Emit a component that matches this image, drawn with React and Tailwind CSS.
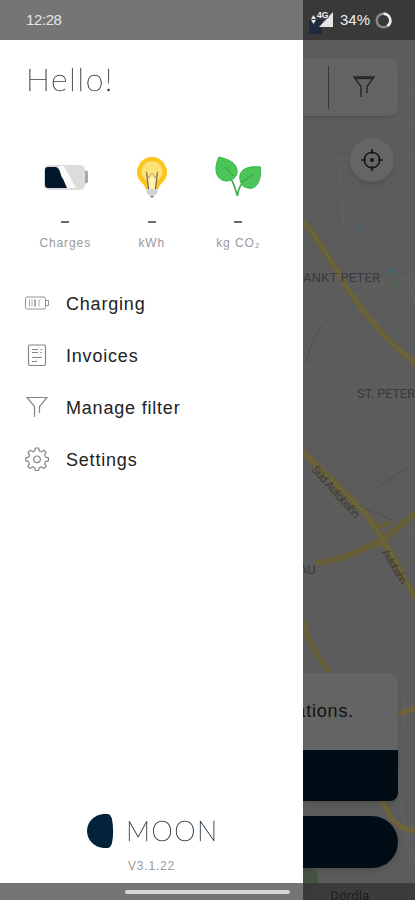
const stats = [
  { label: 'Charges', icon: ChargesIcon },
  { label: 'kWh', icon: BulbIcon },
  { label: 'kg CO₂', icon: LeavesIcon },
];

const menuItems = [
  { label: 'Charging', icon: ChargingIcon },
  { label: 'Invoices', icon: InvoiceIcon },
  { label: 'Manage filter', icon: FilterIcon },
  { label: 'Settings', icon: SettingsIcon },
];

function ChargesIcon() {
  return (
    <svg width="46" height="28" viewBox="0 0 46 28">
      <rect x="40" y="7.500" width="6" height="13" rx="2" fill="#a9a9a9" />
      <rect x="2" y="2" width="41" height="25" rx="5" fill="#dcdcdc" />
      <path d="M16 3h6l12 22h-9z" fill="#fafafa" />
      <path d="M6 4h8c5 2 4 9 7 12l4 9H6a3 3 0 0 1-3-3V7a3 3 0 0 1 3-3z" fill="#02162b" />
    </svg>
  );
}

function BulbIcon() {
  return (
    <svg width="32" height="42" viewBox="0 0 32 42">
      <path d="M16 1a15 15 0 0 0-11.500 24.500c3 3 4.500 4.500 5.500 8h12c1-3.500 2.500-5 5.500-8A15 15 0 0 0 16 1z" fill="#fcc51d" />
      <circle cx="16" cy="15.500" r="10.500" fill="#fbe27a" />
      <path d="M12 33L10 16l3 6 3-5 3 5 3-6-2 17z" fill="#fff0ad" />
      <path d="M12.500 33L10.500 16M19.500 33l2-17" fill="none" stroke="#80724d" strokeWidth="1.400" />
      <path d="M10.500 17l2.500 5 3-5 3 5 2.500-5" fill="none" stroke="#b39d55" strokeWidth="0.900" />
      <path d="M10.500 33h11v4l-3 2v1h-5v-1l-3-2z" fill="#d2d2d2" />
      <path d="M14 40h4l-2 2z" fill="#777" />
    </svg>
  );
}

function LeavesIcon() {
  return (
    <svg width="46" height="42" viewBox="0 0 46 42">
      <path d="M14 20c5 6 6 13 8.500 20C23 32 26 27 32 22" fill="none" stroke="#35ad45" strokeWidth="1.600" />
      <path d="M4 1c8 2 17 5 18 13 1 7-5 11-11 11C1 24-2 13 4 1z" fill="#4bc557" stroke="#36b447" />
      <path d="M45.500 11c-8-1-18.500 0-20.500 8-1 7 2 12 8 13 9 2 13.500-8 12.500-21z" fill="#4bc557" stroke="#36b447" />
      <path d="M10 11l8 9M27 26l11-7" fill="none" stroke="#329b40" strokeWidth="1" />
    </svg>
  );
}

function ChargingIcon() {
  return (
    <svg width="25" height="14" viewBox="0 0 25 14" fill="none" stroke="#929292">
      <rect x="0.500" y="1" width="20" height="12" rx="1.500" />
      <path d="M21 4.500h2.500v5H21" />
      <path d="M4.500 3.500v7M7 3.500v7M14 3.500v7" stroke="#aaa" />
      <path d="M10 3.500v7" strokeWidth="1.300" stroke="#777" />
    </svg>
  );
}

function InvoiceIcon() {
  return (
    <svg width="20" height="23" viewBox="0 0 20 23" fill="none" stroke="#858585">
      <rect x="1.500" y="1" width="17" height="20.500" rx="1.500" strokeWidth="1.200" />
      <path d="M5 5.500h6M5 8.500h6M13.500 5.500h1.500M13.500 8.500h1.500M5 13.500h10M5 17.500h5" />
    </svg>
  );
}

function FilterIcon() {
  return (
    <svg width="22" height="22" viewBox="0 0 22 22" fill="none" stroke="#858585" strokeWidth="1.200">
      <path d="M8.500 21V10.500L1 1.500h20l-7.500 9V17" />
    </svg>
  );
}

function SettingsIcon() {
  return (
    <svg width="24" height="24" viewBox="0 0 24 24" fill="none" stroke="#858585" strokeWidth="1.200">
      <path d="M10.400 1h3.200l.8 3 2 .8 2.700-1.500 2.100 2.100-1.500 2.700.8 2 2.900.7v3l-2.900.8-.8 2 1.500 2.700-2.100 2.100-2.700-1.500-2 .8-.8 2.900h-3.200l-.8-2.900-2-.8-2.700 1.500-2.100-2.100 1.500-2.700-.8-2L.8 13.800v-3l2.900-.7.8-2L3 5.400l2.100-2.100 2.700 1.500 1.800-.8z" strokeLinejoin="round" />
      <circle cx="12" cy="12.300" r="3.300" />
    </svg>
  );
}

function StatusIcons() {
  return (
    <svg width="27" height="28" viewBox="0 0 27 28" aria-hidden="true">
      <path d="M0 14h13v14H0z" fill="#1f2a3e" />
      <path d="M24 6v15H10z" fill="#e6e6e6" />
      <text x="8" y="12" fontSize="8.500" fontWeight="700" fill="#f1f1f1" stroke="#393939" strokeWidth="1.500" paintOrder="stroke">4G</text>
      <path d="M4.500 9l-2.500 4h5zM4.500 18l-2.500-4h5z" fill="#e6e6e6" />
    </svg>
  );
}

function CityMap() {
  return (
    <svg className="absolute inset-0" width="112" height="900" viewBox="303 0 112 900" fill="none" aria-hidden="true">
      <path d="M303 161l18-5 20 3 18-3M394 165l10-4 11-5M397 132l18-9M401 91h14M340 170l4 55-30 17M303 327l43-25 20-13 18-6 25-5 6 25M303 370l35-20 30-25 47-24M303 440l35-25 40-40M322 550l30-25 20-22M372 485l17 35 26 12M397 665l7 40-5 90 12 70" stroke="#616161" strokeWidth="1.500" />
      <path d="M349 307l-8 28-10 36-10 20M380 270l35-9" stroke="#566066" />
      <path d="M322 325l-9 15-7 22M377 487l16-10 15-10M362 507l30 13" stroke="#4f4f4f" />
      <path d="M367 288l20-3 12-7 3 13-12-2z" fill="#566158" />
      <path d="M389 267l8 3-1 4-8-1zM356 223l6 2 2 5-5-1z" fill="#4b626a" />
      <g stroke="#686039" strokeWidth="6">
        <path d="M303 221c12 12 24 34 35 51 11 20 20 34 35 50 12 15 25 27 44 43" />
        <path d="M303 452l28 27 35 35 24 37 25 47" />
        <path d="M316 563c28-3 42-12 61-20 14-8 25-20 40-31" />
        <path d="M366 514c8 13 15 15 25 8M365 548c9-6 16-6 22-1" strokeWidth="4" />
        <path d="M303 620c3 18 10 30 27 53" strokeWidth="5" />
      </g>
      <path d="M303 221c12 12 24 34 35 51 11 20 20 34 35 50 12 15 25 27 44 43M303 452l28 27 35 35 24 37 25 47" stroke="#726b44" strokeWidth="1" />
      <path d="M398 714l17-6M382 800c9 20 15 28 33 31" stroke="#6f6337" strokeWidth="5" />
      <path d="M303 863l14 8 2 29h-16z" fill="#455344" />
      <g fill="#373a3e" fontFamily="Roboto, sans-serif">
        <text x="303" y="281.500" fontSize="13" textLength="77">ANKT PETER</text>
        <text x="357" y="398" fontSize="13" textLength="58">ST. PETER</text>
        <text x="299" y="574" fontSize="13">AU</text>
        <text transform="translate(311 470) rotate(48)" fontSize="11.500" textLength="66" fill="#3f3b2c">Süd Autobahn</text>
        <text transform="translate(382 552) rotate(59)" fontSize="10" textLength="38" fill="#3f3b2c">Autobahn</text>
      </g>
    </svg>
  );
}

function Stat({ label, icon: Icon }) {
  return (
    <div className="flex w-[86.5px] flex-col items-center">
      <div className="flex h-[44px] items-center">
        <Icon />
      </div>
      <div className="mt-[22px] h-[2px] w-[8px] bg-[#6a6a6a]" />
      <div className="mt-[12px] text-[12px] leading-[16px] tracking-[0.9px] whitespace-nowrap text-[#999]">{label}</div>
    </div>
  );
}

function Drawer() {
  return (
    <aside className="z-10 flex w-[303px] shrink-0 flex-col bg-white">
      <header className="flex h-[40px] items-center bg-[#757575] pt-px pl-[26px] text-[15px] tracking-[-0.4px] text-[#e4e4e4]">12:28</header>
      <h1 className="mt-[19px] pl-[26px] font-[Lato] text-[32px] leading-[40px] font-thin tracking-[1.6px] text-[#222] opacity-95 will-change-transform [-webkit-text-stroke:0.4px_#333]">Hello!</h1>
      <div className="mt-[56px] flex pl-[22px]">
        {stats.map((s) => (
          <Stat key={s.label} label={s.label} icon={s.icon} />
        ))}
      </div>
      <nav className="mt-[26px]">
        {menuItems.map(({ label, icon: Icon }) => (
          <a key={label} className="flex h-[52px] items-center pl-[24px]">
            <span className="flex w-[26px] justify-center">
              <Icon />
            </span>
            <span className="mt-[2px] ml-[16px] text-[18px] tracking-[0.8px] text-[#222]">{label}</span>
          </a>
        ))}
      </nav>
      <div className="mt-auto flex h-[36px] items-center pl-[87px]">
        <svg width="27" height="36" viewBox="0 0 27 36">
          <path d="M16 1h4c3 0 4 2 5 5 1.500 8 1.500 17 0 24-1 3-2 5-5 5h-4C7 34 0 27 0 18S7 2 16 1z" fill="#03233b" />
        </svg>
        <span className="ml-[12px] font-[Lato] text-[27px] leading-[36px] font-thin tracking-[1.5px] text-[#26343c] opacity-95 will-change-transform [-webkit-text-stroke:0.5px_#26343c]">MOON</span>
      </div>
      <div className="mt-[9px] mb-[9px] pl-[128px] text-[12px] leading-[16px] tracking-[0.8px] text-[#999]">V3.1.22</div>
      <footer className="flex h-[17px] items-center justify-end bg-[#757575] pr-[13px]">
        <div className="h-[4px] w-[165px] rounded-full bg-[#d5d5d5]" />
      </footer>
    </aside>
  );
}

function MapPanel() {
  return (
    <main className="relative flex min-w-0 flex-1 flex-col bg-[#5c5c5c]">
      <CityMap />
      <header className="relative flex h-[40px] items-center bg-[#393939] pl-[6px] text-[15px] text-[#eee]">
        <StatusIcons />
        <span className="mt-px ml-[4px]">34%</span>
        <svg className="ml-[5px]" width="17" height="17" viewBox="0 0 17 17" fill="none" strokeWidth="2.500">
          <circle cx="8.500" cy="8.500" r="6.800" stroke="#888" />
          <path d="M8.500 1.700a6.800 6.800 0 0 1 4 12.300" stroke="#eee" />
        </svg>
      </header>
      <div className="relative mt-[18px] mr-[17px] flex h-[58px] items-center rounded-r-[8px] bg-[#636363] shadow-sm">
        <div className="ml-[25px] h-[43px] w-px bg-[#383838]" />
        <svg className="ml-[24px]" width="22" height="22" viewBox="0 0 22 22" fill="none" stroke="#222" strokeWidth="1.300">
          <path d="M8 21V10.500L1 1h20l-7 9.500V17" />
          <path d="M2 2.500h18" />
        </svg>
      </div>
      <div className="relative mt-[22px] mr-[21px] flex size-[44px] items-center justify-center self-end rounded-full bg-[#656565] shadow-md">
        <svg width="22" height="22" viewBox="0 0 24 24" fill="none" stroke="#161616" strokeWidth="1.800">
          <circle cx="12" cy="12" r="8.500" />
          <circle cx="12" cy="12" r="2.200" fill="#161616" stroke="none" />
          <path d="M12 0v5.500M12 18.500V24M0 12h5.500M18.500 12H24" />
        </svg>
      </div>
      <section className="relative mt-auto mr-[17px] h-[128px] rounded-r-[8px] bg-[#646464] shadow-md">
        <div className="flex h-[77px] items-center justify-end pr-[44px] text-[18px] tracking-[0.8px] whitespace-nowrap text-[#111]">ations.</div>
        <div className="h-[51px] rounded-br-[8px] bg-[#000c16]" />
      </section>
      <div className="relative mt-[15px] mr-[17px] mb-[15px] h-[52px] rounded-r-full bg-[#000c16] shadow-md" />
      <footer className="relative flex h-[17px] items-start justify-center overflow-hidden bg-[#393939]/90 pr-[18px] font-[Roboto] text-[13px] leading-[26px] tracking-[0.2px] text-[#1d1d1d]">Dördla</footer>
    </main>
  );
}

export default function App() {
  return (
    <div className="flex h-[900px] w-[415px] overflow-hidden font-['Liberation_Sans',Arial,sans-serif]">
      <Drawer />
      <MapPanel />
    </div>
  );
}
